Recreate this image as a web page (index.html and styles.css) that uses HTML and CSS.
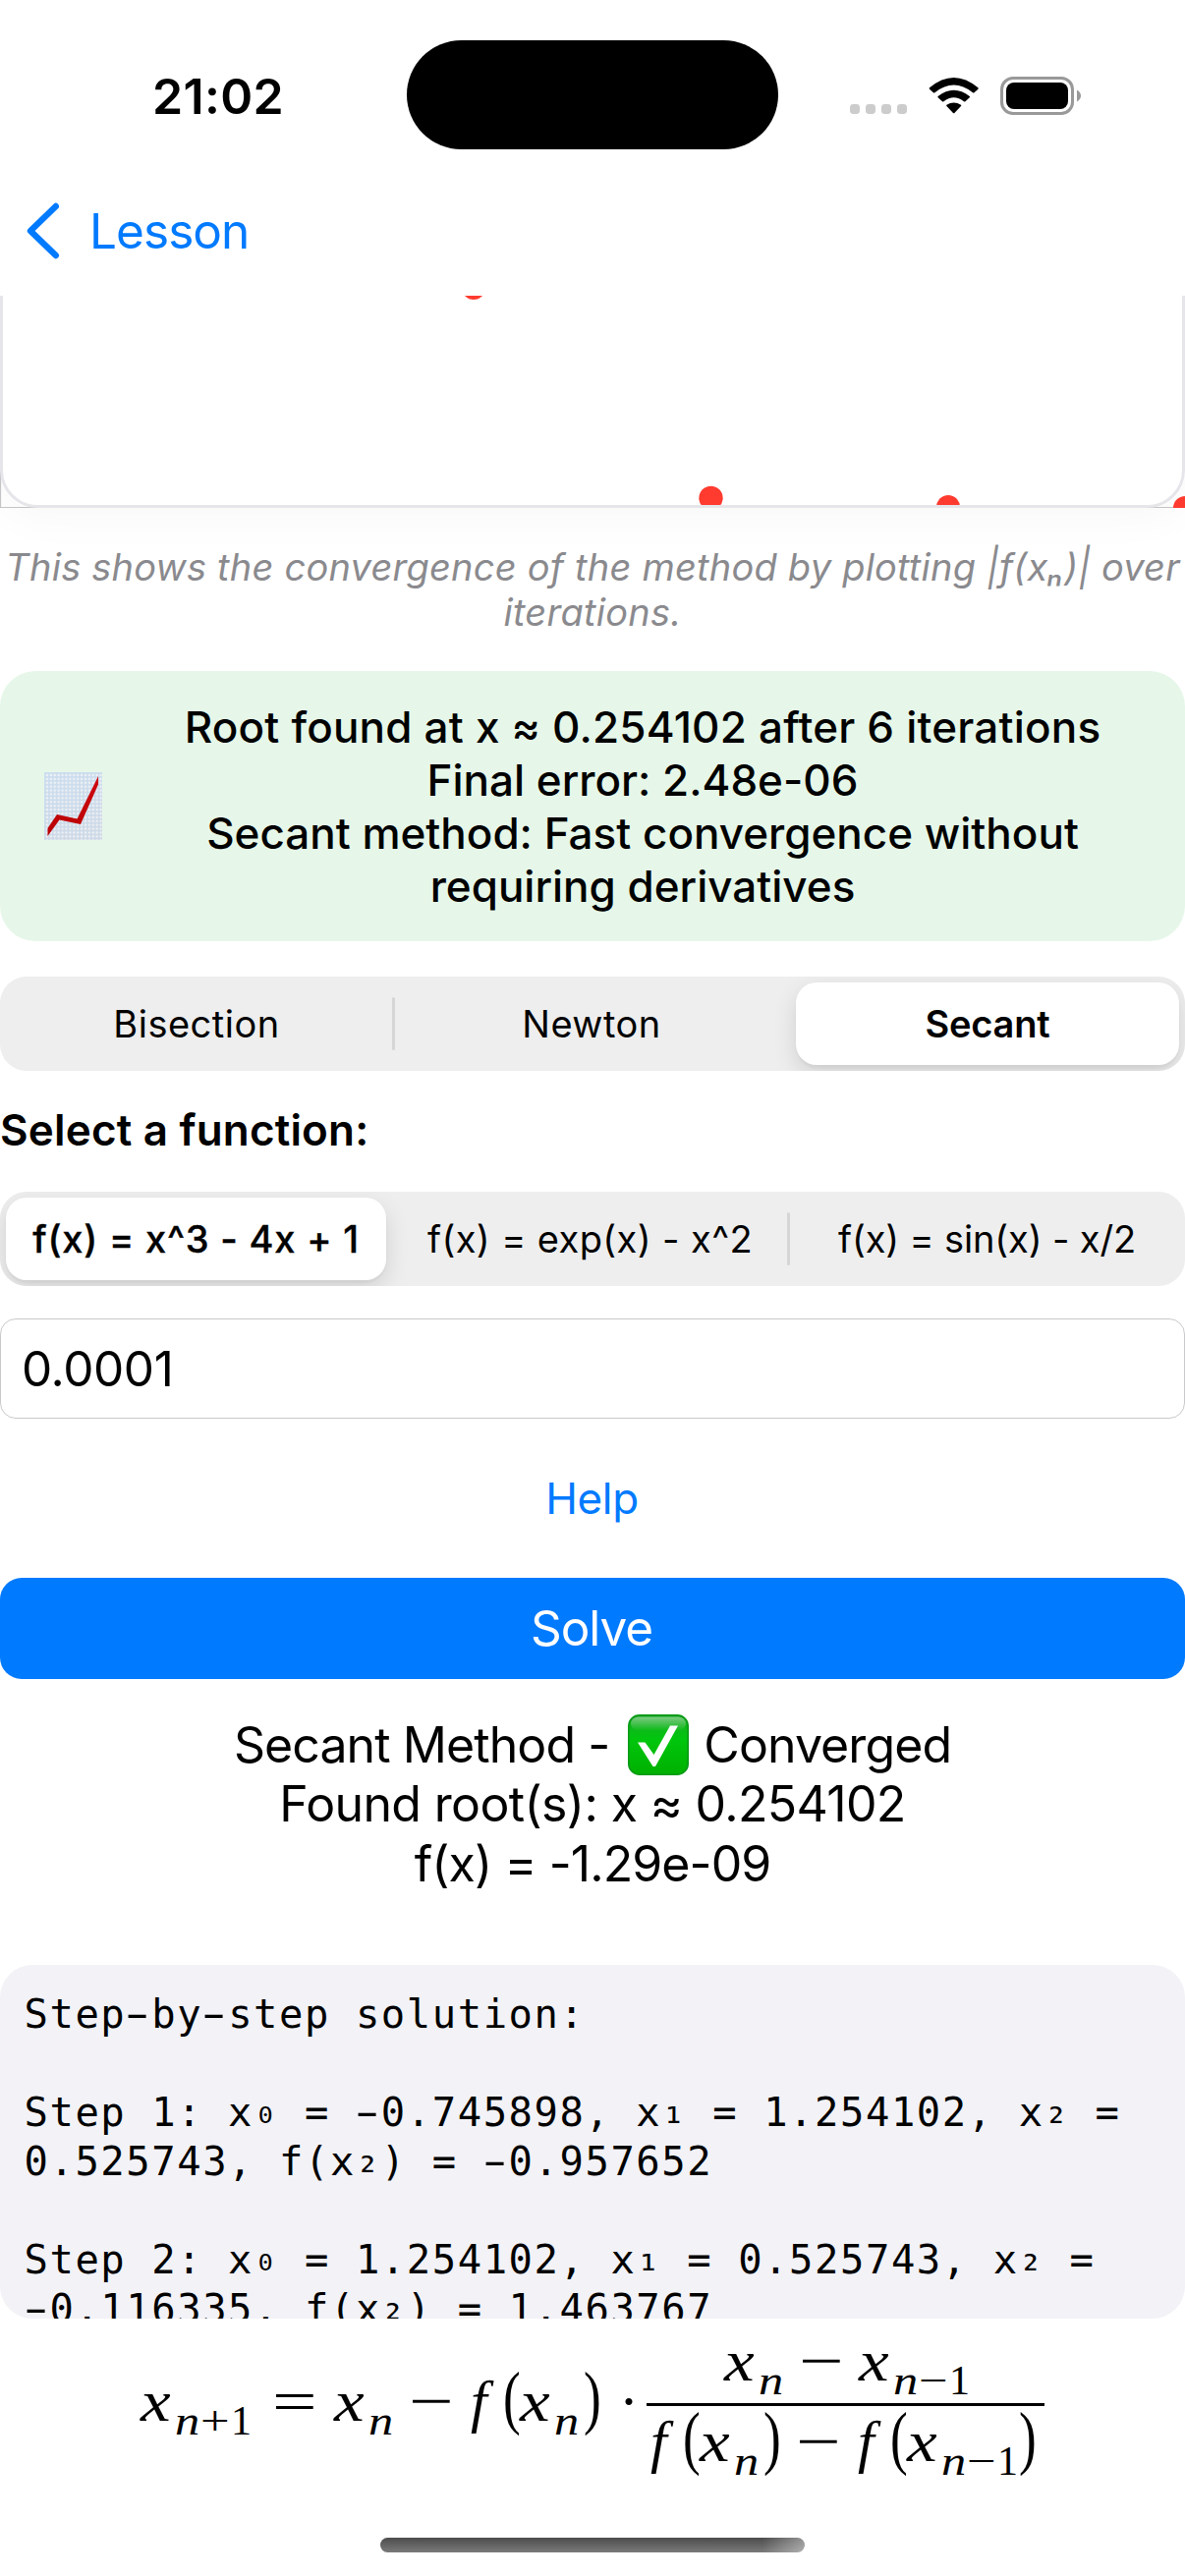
FILE: index.html
```html
<!DOCTYPE html>
<html lang="en">
<head>
<meta charset="utf-8">
<title>Lesson</title>
<link rel="stylesheet" href="styles.css">
</head>
<body>
<header class="status">
  <div class="time">21:02</div>
  <div class="island"></div>
  <div class="indicators">
    <svg width="58" height="42" viewBox="865 76 58 42" fill="#ccc"><rect x="865" y="106" width="10" height="10" rx="3.4"/><rect x="881" y="106" width="10" height="10" rx="3.4"/><rect x="897" y="106" width="10" height="10" rx="3.4"/><rect x="913" y="106" width="10" height="10" rx="3.4"/></svg>
    <svg width="52" height="42" viewBox="945 76 52 42"><path d="M946 89.3Q970.7 68.700 995.400 89.300Q996 90 995.400 90.700L991.500 94.300Q990.800 94.800 990 94.200Q970.700 78.800 951.400 94.200Q950.600 94.800 949.900 94.300L946 90.700Q945.400 90 946 89.300Z"/><path d="M954.600 97.900Q970.700 85.500 986.800 97.900Q987.400 98.600 986.800 99.200L982.400 103.300Q981.700 103.800 981 103.200Q970.700 95.100 960.400 103.200Q959.700 103.800 959 103.300L954.600 99.200Q954 98.600 954.600 97.900Z"/><path d="M963.400 106.700Q970.700 102.200 978 106.700Q978.700 107.400 978 108.100L971.400 115Q970.700 115.700 970 115L963.400 108.100Q962.700 107.400 963.400 106.700Z"/></svg>
    <svg width="83" height="42" viewBox="1018 76 83 42"><rect x="1019.500" y="79.500" width="72" height="36" rx="11.500" fill="none" stroke="#999" stroke-width="3"/><rect x="1024" y="84" width="63" height="27" rx="8"/><path d="M1096 91.500Q1100 94 1100 97.500T1096 103.500Z" fill="#999"/></svg>
  </div>
</header>
<nav class="nav">
  <svg width="36" height="60" viewBox="0 0 36 60" fill="none" stroke="#007aff" stroke-width="6.400" stroke-linecap="round" stroke-linejoin="round"><path d="M29.800 5L4 30L29.800 55"/></svg>
  <a class="back">Lesson</a>
</nav>
<main class="content">
  <div class="plot">
    <svg width="1206" height="216" viewBox="0 0 1206 216">
      <path d="M.5 0V215.500H1206" fill="none" stroke="#c4c4c6" stroke-width="1.200"/>
      <g fill="#ff3b30"><circle cx="482" cy="-8" r="12"/><circle cx="723.500" cy="206" r="12.200"/><circle cx="965" cy="215" r="12"/></g>
      <rect x="1.500" y="-60" width="1203" height="274.500" rx="37" fill="none" stroke="#e5e5ea" stroke-width="3"/>
      <circle cx="1206" cy="216" r="12" fill="#ff3b30"/>
    </svg>
  </div>
  <p class="caption"><span class="caption-first">This shows the convergence of the method by plotting |f(xₙ)| over</span> <span>iterations.</span></p>
  <section class="summary">
    <svg width="59" height="69" viewBox="0 0 59 69">
      <defs>
        <linearGradient id="paper" x2=".3" y2="1"><stop stop-color="#dbe4ee"/><stop offset="1" stop-color="#dedee2"/></linearGradient>
        <pattern id="grid" width="3.900" height="3.900" patternUnits="userSpaceOnUse"><path d="M0 1H3.900M1 0V3.900" stroke="#b4d4f2" stroke-width="1" opacity=".6"/><path d="M2 3H3.900" stroke="#f2f4f7" stroke-width="1.800"/></pattern>
        <linearGradient id="line" x2="0" y2="1"><stop stop-color="#cf0b12"/><stop offset="1" stop-color="#b90000"/></linearGradient>
      </defs>
      <path d="M0 0H59V69H0Z" fill="url(#paper)"/><path d="M0 0H59V69H0Z" fill="url(#grid)"/>
      <path d="M3.500 57L13 43L33.500 47.500L55 4V12.500L37 53L15.500 48.500L3.500 65Z" fill="url(#line)"/>
    </svg>
    <p class="summary-text"><span class="s1">Root found at x ≈ 0.254102 after 6 iterations</span> <span>Final error: 2.48e-06</span> <span>Secant method: Fast convergence without</span> <span>requiring derivatives</span></p>
  </section>
  <div class="segments">
    <div class="segment wide">Bisection</div>
    <div class="segment divided">Newton</div>
    <div class="segment active">Secant</div>
  </div>
  <h2 class="label">Select a function:</h2>
  <div class="segments functions">
    <div class="segment active f1">f(x) = x^3 - 4x + 1</div>
    <div class="segment f2">f(x) = exp(x) - x^2</div>
    <div class="segment divided f3">f(x) = sin(x) - x/2</div>
  </div>
  <div class="field">0.0001</div>
  <a class="help">Help</a>
  <div class="solve">Solve</div>
  <section class="result">
    <div class="result-row">
      <span>Secant Method -</span>
      <svg class="check" width="62" height="62" viewBox="0 0 62 62">
        <defs>
          <linearGradient id="green" x2="0" y2="1"><stop stop-color="#12a01c"/><stop offset=".25" stop-color="#0cbb18"/><stop offset=".4" stop-color="#00c60d"/><stop offset="1" stop-color="#00b000"/></linearGradient>
          <linearGradient id="gloss" x2="0" y2="1"><stop stop-color="#fff" stop-opacity=".45"/><stop offset="1" stop-color="#fff" stop-opacity="0"/></linearGradient>
        </defs>
        <rect x=".8" y=".8" width="60.400" height="60.400" rx="11" fill="url(#green)" stroke="#0a9a18" stroke-width="1.600"/>
        <rect x="3" y="2.500" width="56" height="14" rx="8" fill="url(#gloss)"/>
        <path d="M10 28.500H17.500L26.500 41L43 11.500H51L28 53H25.500Z" fill="#fff"/>
      </svg>
      <span>Converged</span>
    </div>
    <div class="root">Found root(s): x ≈ 0.254102</div>
    <div>f(x) = -1.29e-09</div>
  </section>
  <section class="steps">
    <p>Step<i>-</i>by<i>-</i>step solution:</p>
    <p>Step 1: x<b>₀</b> = <i>-</i>0.745898, x<b>₁</b> = 1.254102, x<b>₂</b> =<br>0.525743, f(x<b>₂</b>) = <i>-</i>0.957652</p>
    <p>Step 2: x<b>₀</b> = 1.254102, x<b>₁</b> = 0.525743, x<b>₂</b> =<br><i>-</i>0.116335, f(x<b>₂</b>) = 1.463767</p>
  </section>
  <section class="formula">
    <div class="math lead">
      <span class="x">x</span><span class="n">n</span><span class="so">+</span><span class="one">1</span><span class="op rel">=</span><span class="x">x</span><span class="n">n</span><span class="op">−</span><span class="f">f</span><span class="paren">(</span><span class="x">x</span><span class="n">n</span><span class="paren close">)</span><span class="dot">·</span>
    </div>
    <div class="fraction">
      <div class="math"><span class="x">x</span><span class="n">n</span><span class="op">−</span><span class="x">x</span><span class="n">n</span><span class="so">−</span><span class="one">1</span></div>
      <div class="math denominator"><span class="f">f</span><span class="paren">(</span><span class="x">x</span><span class="n">n</span><span class="paren close">)</span><span class="op">−</span><span class="f">f</span><span class="paren">(</span><span class="x">x</span><span class="n">n</span><span class="so">−</span><span class="one">1</span><span class="paren close">)</span></div>
    </div>
  </section>
</main>
<div class="home"></div>
</body>
</html>
```
FILE: styles.css
```css
* { box-sizing: border-box; }
body { margin: 0; width: 1206px; height: 2622px; overflow: hidden; background: #fff; color: #000; font-family: Inter, "Liberation Sans", sans-serif; display: flex; flex-direction: column; }
p, h2 { margin: 0; }
svg { display: block; flex: none; }

.status { height: 169px; padding: 38px 0 14px; display: grid; grid-template-columns: 414px 378px 414px; align-items: center; }
.time { padding-left: 155px; margin-top: 3px; font-size: 50px; font-weight: 600; line-height: 60px; letter-spacing: .3px; }
.island { height: 111px; border-radius: 56px; background: #000; }
.indicators { display: flex; padding-left: 73px; margin-top: 1px; }
.indicators svg + svg { margin-left: 22px; }
.indicators svg:last-child { margin-left: 21px; }

.nav { height: 132px; padding-left: 27px; display: flex; align-items: center; gap: 28px; background: #fff; position: relative; z-index: 1; }
.back { color: #007aff; font-size: 49.500px; line-height: 60px; letter-spacing: -.95px; }

.content { display: flex; flex-direction: column; }
.plot { height: 216px; border-radius: 0 0 36px 36px; box-shadow: 0 6px 48px rgba(0, 0, 0, .04); }
.caption { margin-top: 37px; height: 92px; color: #8a8a8e; font-size: 38px; font-style: italic; line-height: 46px; text-align: center; white-space: nowrap; }
.caption span, .summary-text span { display: block; letter-spacing: .25px; }
.caption .caption-first { letter-spacing: .222px; }

.summary { margin-top: 37px; height: 275px; padding: 29.500px 46px 29.500px 45px; display: flex; align-items: center; gap: 44px; border-radius: 36px; background: #e6f7e9; }
.summary-text { flex: 1; font-size: 44px; font-weight: 500; line-height: 54px; text-align: center; }
.summary-text span { letter-spacing: 0; }
.summary-text .s1 { letter-spacing: .2px; }

.segments { margin-top: 36px; height: 96px; padding: 6px; display: grid; grid-template-columns: 402px 402px 390px; border-radius: 27px; background: #eee; overflow: hidden; font-size: 38px; text-align: center; letter-spacing: .5px; }
.segment { display: flex; align-items: center; justify-content: center; position: relative; }
.segment.wide { padding-right: 14px; }
.segment.active { border-radius: 21px; background: #fff; font-weight: 600; letter-spacing: -.2px; box-shadow: 0 9px 24px rgba(0, 0, 0, .12), 0 3px 3px rgba(0, 0, 0, .04); }
.segment.divided::before { content: ""; position: absolute; left: -9px; top: 15px; width: 3px; height: 54px; border-radius: 2px; background: #d6d6d6; }
.segment.divided { padding-right: 14px; }
.functions { grid-template-columns: 387px 409px 398px; }
.functions .segment { letter-spacing: .4px; }
.functions .f1 { font-weight: 500; letter-spacing: .78px; -webkit-text-stroke: .35px #000; }
.functions .f2 { padding-left: 6px; }
.functions .f3 { padding: 0 0 0 7px; letter-spacing: -.14px; }
.functions .f3::before { left: -1px; }

.label { margin-top: 33px; font-size: 44px; font-weight: 600; line-height: 54px; letter-spacing: .18px; }
.field { margin-top: 33px; height: 102px; padding-left: 21px; border: 1px solid #c9c9cb; border-radius: 16px; font-size: 49.500px; line-height: 101px; letter-spacing: -.4px; }
.help { margin-top: 54px; color: #007aff; font-size: 44px; line-height: 54px; letter-spacing: -.34px; text-align: center; padding-right: 1px; }
.solve { margin-top: 54px; height: 103px; border-radius: 22px; background: #007aff; color: #fff; font-size: 49.500px; line-height: 103px; letter-spacing: -1.100px; text-align: center; padding-right: 2px; }

.result { margin-top: 36.500px; font-size: 50px; line-height: 60.500px; letter-spacing: -.92px; text-align: center; }
.result-row { height: 60.500px; display: flex; align-items: center; justify-content: center; gap: 17px; }
.check { margin: 0 -2px 0 2px; }
.result .root { letter-spacing: -.64px; }

.steps { margin-top: 73px; height: 360px; padding: 24.500px 23px 0 24.500px; border-radius: 33px; background: #f2f2f7; overflow: hidden; font-family: "DejaVu Sans Mono", monospace; font-size: 40.500px; line-height: 50.150px; letter-spacing: 1.570px; white-space: nowrap; }
.steps p + p { margin-top: 50.150px; }
.steps b { font-weight: 400; position: relative; top: -3px; }
.steps i { display: inline-block; font-style: normal; transform: scaleX(1.750); }

.formula { height: 160px; padding: 8px 0 0 143px; display: flex; align-items: flex-start; overflow: hidden; font-family: "Liberation Serif", serif; font-size: 60px; }
.math { display: flex; align-items: baseline; height: 70px; line-height: 70px; }
.math span { flex: none; transform-origin: 0 50%; }
.lead { margin-top: 41px; width: 515px; }
.math .x { width: 35px; font-style: italic; transform: scaleX(1.150); }
.math .n { width: 26px; font-size: 42px; font-style: italic; line-height: 40px; position: relative; top: 14px; transform: scaleX(1.200); }
.math .so { width: 31px; font-size: 42px; line-height: 40px; position: relative; top: 14px; transform: scaleX(1.250); }
.math .one { width: 18px; font-size: 42px; line-height: 40px; position: relative; top: 14px; }
.math .op { width: 40px; margin: 0 19px 0 17px; transform: translateX(-2px) scaleX(1.350); }
.math .rel { margin: 0 21px 0 26px; }
.math .f { width: 35px; font-style: italic; padding-left: 8px; transform: translateX(-6px); }
.math .paren { width: 17px; font-size: 71px; line-height: 60px; transform: scaleX(.75); }
.math .close { width: 15px; margin: 0 3px 0 4px; }
.math .dot { margin-left: 18px; }
.fraction { width: 405px; display: flex; flex-direction: column; align-items: center; }
.denominator { margin-top: 8px; padding: 1px 0 0 2px; border-top: 3px solid #000; width: 405px; height: 74px; }

.home { margin: 63px auto 0; width: 432px; height: 15px; flex: none; border-radius: 8px; background: linear-gradient(90deg, transparent 90%, rgba(255, 255, 255, .4)), linear-gradient(#4c4c4c, #7a7a7a); }
```
